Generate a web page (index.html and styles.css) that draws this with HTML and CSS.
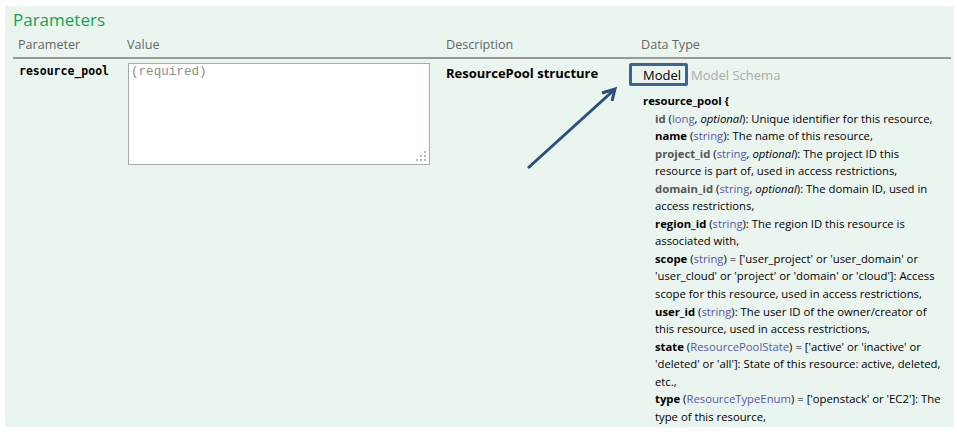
FILE: index.html
```html
<!DOCTYPE html>
<html>
<head>
<meta charset="utf-8">
<link rel="stylesheet" href="styles.css">
</head>
<body>
<div class="panel">
  <h4 class="title">Parameters</h4>
  <table class="params">
    <colgroup>
      <col class="c-param"><col class="c-value"><col class="c-desc"><col class="c-type">
    </colgroup>
    <thead>
      <tr><th>Parameter</th><th>Value</th><th>Description</th><th>Data Type</th></tr>
    </thead>
    <tbody>
      <tr>
        <td class="code">resource_pool</td>
        <td><div class="ta-wrap"><textarea class="body-textarea" placeholder="(required)"></textarea></div></td>
        <td class="desc"><strong>ResourcePool structure</strong></td>
        <td class="type">
          <ul class="signature-nav">
            <li><span class="tab selected">Model</span></li>
            <li><span class="tab">Model Schema</span></li>
          </ul>
          <div class="model">
            <div class="model-name">resource_pool {</div>
            <div class="props">
              <div><span class="opt-name">id</span> (<span class="ptype">long</span>, <em>optional</em>): Unique identifier for this resource,</div>
              <div><span class="name">name</span> (<span class="ptype">string</span>): The name of this resource,</div>
              <div><span class="opt-name">project_id</span> (<span class="ptype">string</span>, <em>optional</em>): The project ID this resource is part of, used in access restrictions,</div>
              <div><span class="opt-name">domain_id</span> (<span class="ptype">string</span>, <em>optional</em>): The domain ID, used in access restrictions,</div>
              <div><span class="name">region_id</span> (<span class="ptype">string</span>): The region ID this resource is associated with,</div>
              <div><span class="name">scope</span> (<span class="ptype">string</span>) = ['user_project' or 'user_domain' or 'user_cloud' or 'project' or 'domain' or 'cloud']: Access scope for this resource, used in access restrictions,</div>
              <div><span class="name">user_id</span> (<span class="ptype">string</span>): The user ID of the owner/creator of this resource, used in access restrictions,</div>
              <div><span class="name">state</span> (<span class="ptype">ResourcePoolState</span>) = ['active' or 'inactive' or 'deleted' or 'all']: State of this resource: active, deleted, etc.,</div>
              <div><span class="name">type</span> (<span class="ptype">ResourceTypeEnum</span>) = ['openstack' or 'EC2']: The type of this resource,</div>
            </div>
          </div>
        </td>
      </tr>
    </tbody>
  </table>
  <svg class="arrow" width="100" height="96" viewBox="0 0 100 96">
    <line x1="6" y1="91" x2="92" y2="13" stroke="#27507f" stroke-width="3"/>
    <polyline points="80,16 93,12 90,24" fill="none" stroke="#27507f" stroke-width="3" stroke-linejoin="miter"/>
  </svg>
</div>
</body>
</html>
```

FILE: styles.css
```css
html, body {
  margin: 0;
  padding: 0;
  background: #ffffff;
  overflow: hidden;
}
body {
  font-family: "Open Sans", "Noto Sans", sans-serif;
  font-size: 13px;
  color: #000;
}
.panel {
  position: relative;
  margin: 6px 3px 0 5px;
  background: #ebf5f0;
  padding: 4px 3px 3px 8px;
  height: 414px;
  overflow: hidden;
}
.title {
  margin: 0;
  font-size: 17px;
  font-weight: normal;
  color: #10a54a;
  line-height: 20px;
}
.params {
  width: 938px;
  border-collapse: collapse;
  table-layout: fixed;
  margin-top: 1px;
}
.c-param { width: 109px; }
.c-value { width: 319px; }
.c-desc { width: 195px; }
.c-type { width: 315px; }
.params th {
  text-align: left;
  font-weight: normal;
  color: #666;
  font-size: 12.6px;
  padding: 5px 5px 4px;
  border-bottom: 2px solid #999;
  line-height: 17px;
}
.params td {
  vertical-align: top;
  padding: 5px 5px 0;
}
.code {
  font-family: "DejaVu Sans Mono", monospace;
  font-weight: bold;
  font-size: 11.5px;
  padding-left: 6px !important;
  line-height: 15px;
}
.ta-wrap {
  position: relative;
  width: 302px;
  margin-left: 1px;
  margin-top: -1px;
}
.ta-wrap::after {
  content: "";
  position: absolute;
  right: 4px;
  bottom: 4px;
  width: 2px;
  height: 2px;
  background: #bbb;
  box-shadow: -4px 0 #bbb, -8px 0 #bbb, 0 -4px #bbb, -4px -4px #bbb, 0 -8px #bbb;
}
.body-textarea {
  display: block;
  box-sizing: border-box;
  width: 302px;
  height: 102px;
  margin: 0;
  border: 1px solid #aaa;
  padding: 1px 3px 3px 2px;
  font-family: "Liberation Mono", monospace;
  font-size: 12.6px;
  resize: none;
  background: #fff;
}
.body-textarea::placeholder { color: #8c8c8c; }
.desc strong {
  font-size: 13px;
  line-height: 15px;
}
.signature-nav {
  list-style: none;
  margin: 0;
  padding: 0;
  display: flex;
  gap: 6px;
  line-height: 20px;
}
.tab {
  display: inline-block;
  padding: 1px 2px 0;
  color: #aaa;
}
.tab.selected {
  position: relative;
  color: #000;
}
.tab.selected::before {
  content: "";
  position: absolute;
  left: -12px;
  top: -1px;
  right: -5px;
  bottom: -1px;
  border: 3px solid #3c6593;
  border-radius: 2px;
}
.model {
  margin-top: 7px;
  font-size: 11.3px;
  line-height: 17.55px;
  padding-left: 2px;
  padding-right: 4px;
}
.model-name { font-weight: bold; }
.props { padding-left: 12px; }
.name { font-weight: bold; }
.opt-name { font-weight: bold; color: #555; }
.ptype { color: #5555aa; }
.arrow {
  position: absolute;
  left: 517px;
  top: 71px;
}
```
